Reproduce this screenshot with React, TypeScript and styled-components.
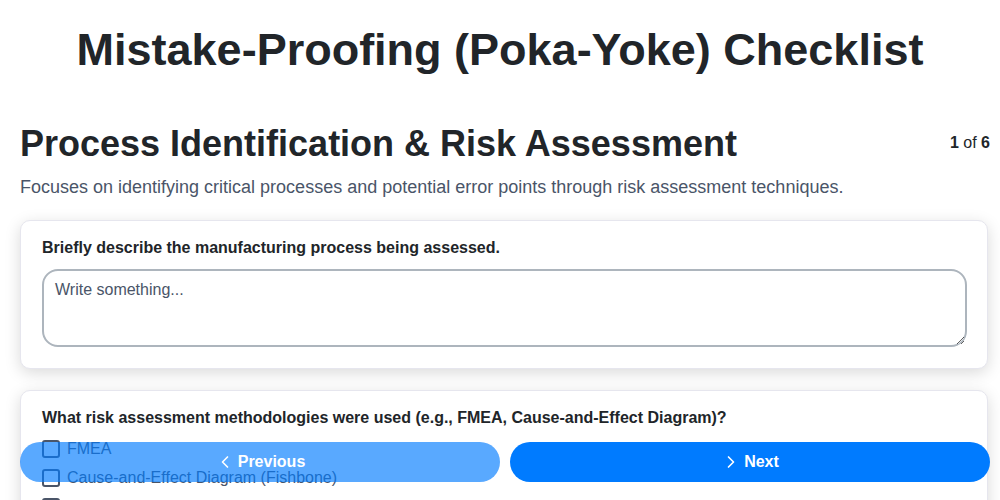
import React from "react";
import styled, { createGlobalStyle } from "styled-components";
import { ChevronLeft, ChevronRight } from "lucide-react";

const Global = createGlobalStyle`
  html, body { margin: 0; padding: 0; background: #ffffff; }
  body { font-family: "Liberation Sans", Arial, sans-serif; color: #212529; }
  * { box-sizing: border-box; }
`;

const Page = styled.div`
  padding: 24px 0 80px;
  display: flex;
  flex-direction: column;
`;

const Header = styled.header`
  padding: 0 20px;
`;

const Title = styled.h1`
  margin: 0;
  text-align: center;
  font-size: 45px;
  font-weight: 700;
  line-height: 1.15;
  color: #212529;
`;

const Main = styled.main`
  padding: 0 10px 0 20px;
  display: flex;
  flex-direction: column;
`;

const SectionHeader = styled.div`
  margin-top: 47px;
  display: flex;
  align-items: center;
  justify-content: space-between;
`;

const SectionTitle = styled.h2`
  margin: 0;
  font-size: 36px;
  font-weight: 700;
  line-height: 1.15;
  color: #212529;
`;

const Counter = styled.div`
  font-size: 16px;
  color: #212529;
  b { font-weight: 700; }
`;

const Description = styled.p`
  margin: 13px 0 0;
  font-size: 18px;
  line-height: 1.2;
  color: #4a5568;
`;

const Questions = styled.div`
  margin-top: 21px;
  margin-right: 2px;
  display: flex;
  flex-direction: column;
  gap: 21px;
`;

const Card = styled.div`
  background: #fff;
  border: 1px solid #e6e6ee;
  border-radius: 10px;
  box-shadow: 0 4px 16px rgba(0, 0, 0, 0.15);
  padding: 18px 20px 21px 21px;
  display: flex;
  flex-direction: column;
`;

const Label = styled.label`
  font-size: 16px;
  font-weight: 700;
  line-height: 18px;
  color: #212529;
`;

const TextArea = styled.textarea`
  margin-top: 12px;
  width: 100%;
  height: 78px;
  border: 2px solid #adb5bd;
  border-radius: 16px;
  padding: 10px 11px;
  font-family: "Liberation Sans", Arial, sans-serif;
  font-size: 16px;
  color: #212529;
  resize: vertical;
  outline: none;
  &::placeholder { color: #4a5568; opacity: 1; }
`;

const Options = styled.div`
  margin-top: 13px;
  display: flex;
  flex-direction: column;
  gap: 11px;
`;

const Option = styled.label`
  display: flex;
  align-items: center;
  gap: 7px;
  font-size: 16px;
  color: #4a5568;
  line-height: 18px;
`;

const Box = styled.span`
  width: 18px;
  height: 18px;
  border: 2px solid #4a5568;
  border-radius: 3px;
  flex-shrink: 0;
`;

const Footer = styled.div`
  position: fixed;
  left: 20px;
  right: 10px;
  bottom: 18px;
  display: grid;
  grid-template-columns: 1fr 1fr;
  gap: 10px;
`;

const NavButton = styled.button<{ $disabled?: boolean }>`
  height: 40px;
  border: none;
  border-radius: 20px;
  background: #007bff;
  color: #fff;
  font-family: "Liberation Sans", Arial, sans-serif;
  font-size: 16px;
  font-weight: 700;
  display: flex;
  align-items: center;
  justify-content: center;
  gap: 3px;
  opacity: ${(p) => (p.$disabled ? 0.65 : 1)};
  cursor: pointer;
`;

const options = [
  "FMEA",
  "Cause-and-Effect Diagram (Fishbone)",
  "Fault Tree Analysis",
  "Other",
];

export default function App() {
  return (
    <>
      <Global />
      <Page>
        <Header>
          <Title>Mistake-Proofing (Poka-Yoke) Checklist</Title>
        </Header>
        <Main>
          <SectionHeader>
            <SectionTitle>Process Identification &amp; Risk Assessment</SectionTitle>
            <Counter>
              <b>1</b> of <b>6</b>
            </Counter>
          </SectionHeader>
          <Description>
            Focuses on identifying critical processes and potential error points through risk
            assessment techniques.
          </Description>
          <Questions>
            <Card>
              <Label>Briefly describe the manufacturing process being assessed.</Label>
              <TextArea placeholder="Write something..." />
            </Card>
            <Card>
              <Label>
                What risk assessment methodologies were used (e.g., FMEA, Cause-and-Effect
                Diagram)?
              </Label>
              <Options>
                {options.map((o) => (
                  <Option key={o}>
                    <Box />
                    {o}
                  </Option>
                ))}
              </Options>
            </Card>
          </Questions>
        </Main>
      </Page>
      <Footer>
        <NavButton $disabled>
          <ChevronLeft size={20} strokeWidth={2} />
          Previous
        </NavButton>
        <NavButton>
          <ChevronRight size={20} strokeWidth={2} />
          Next
        </NavButton>
      </Footer>
    </>
  );
}
